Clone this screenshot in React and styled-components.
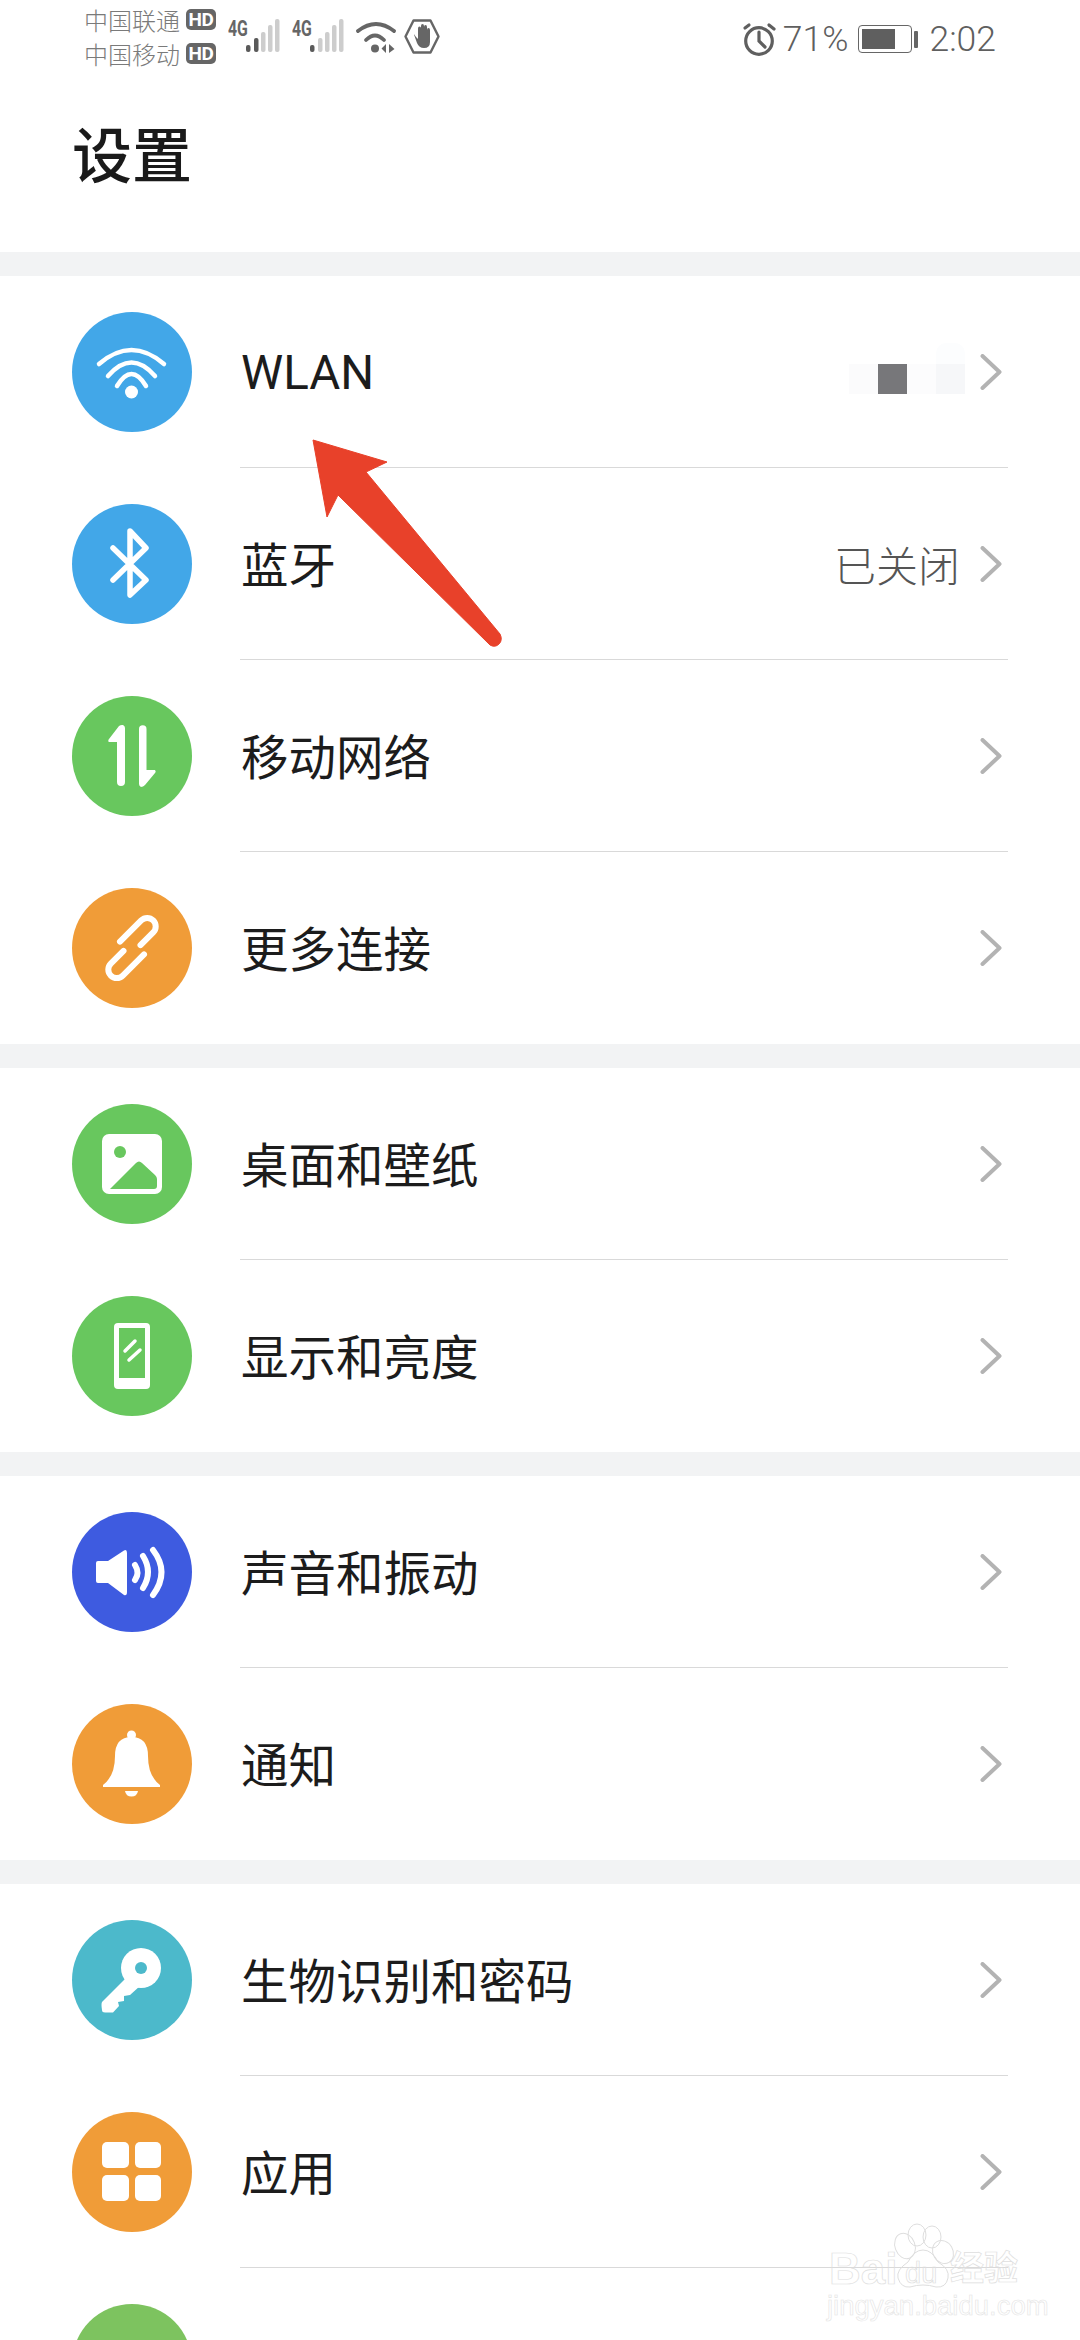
import React from "react";
import styled, { createGlobalStyle } from "styled-components";

const Global = createGlobalStyle`
  html, body { margin: 0; padding: 0; background: #fff; }
  * { box-sizing: border-box; }
`;
const FONT = `Roboto, "Noto Sans CJK SC", sans-serif`;

const Page = styled.div`
  position: relative; width: 1080px; height: 2340px; overflow: hidden;
  background: #f2f3f4; font-family: ${FONT};
`;
const Header = styled.header`background: #fff; height: 252px;`;
const StatusBar = styled.div`
  display: flex; align-items: flex-start; height: 72px; padding: 3px 84px 0 84px;
`;
const Carriers = styled.div`display: flex; flex-direction: column; margin-top: -1px;`;
const Carrier = styled.div`
  display: flex; align-items: center; height: 34px; gap: 6px;
  font-size: 24px; color: #7a7a7a; white-space: nowrap; font-weight: 300;
`;
const HdBadge = styled.span`
  display: flex; align-items: center; justify-content: center;
  width: 30px; height: 21px; border-radius: 5px; background: #666; color: #fff;
  font: 700 19px/1 ${FONT}; letter-spacing: -0.5px;
`;
const Signal = styled.div`
  position: relative; width: 52px; height: 36px; margin: 16px 0 0 ${p => p.$gap}px; flex: none;
`;
const NetLabel = styled.span`
  position: absolute; left: 0; top: -1px; font: 700 22px/22px ${FONT}; color: #666;
  transform: scaleX(0.72); transform-origin: left center;
`;
const SignalBars = styled.svg`position: absolute; left: 16px; top: 0;`;
const StatusIcon = styled.svg`flex: none; margin: ${p => p.$top || 14}px 0 0 ${p => p.$left}px;`;
const StatusRight = styled.div`
  display: flex; align-items: center; margin-left: auto; height: 42px; margin-top: 15px;
  font-size: 35.5px; font-weight: 300; color: #5f5f5f;
`;
const StatusText = styled.span`margin-left: ${p => p.$left}px; white-space: nowrap;`;
const Battery = styled.div`
  display: flex; align-items: center; margin-left: 10px; gap: 2px;
`;
const BatteryCase = styled.div`
  width: 54px; height: 28px; padding: 3px; border: 1.5px solid #666; border-radius: 4px;
`;
const BatteryLevel = styled.div`height: 100%; background: #5f5f5f;`;
const BatteryNub = styled.div`width: 4px; height: 17px; background: #666; border-radius: 1px;`;

const Title = styled.h1`
  margin: 0; padding: 47px 0 0 72px; font: 500 60px/78px ${FONT}; color: #1a1a1a;
`;
const Group = styled.section`background: #fff; margin-top: 24px;`;
const Row = styled.div`display: flex; align-items: center; height: 192px; padding-left: 72px;`;
const IconCircle = styled.div`
  flex: none; width: 120px; height: 120px; border-radius: 50%; background: ${p => p.$color};
  display: flex;
`;
const RowBody = styled.div`
  flex: 1; height: 100%; display: flex; align-items: center; margin: 0 72px 0 48px;
  padding-right: 6px;
  border-bottom: ${p => (p.$last ? "none" : "1.5px solid #d9d9d9")};
`;
const Label = styled.div`
  flex: 1; font-size: 47.5px; color: #1c1c1c; white-space: nowrap;
  padding: ${p => (p.$latin ? "3px 0 0 1px" : "0 0 3px 1px")};
`;
const Value = styled.div`font-size: 42px; font-weight: 300; color: #555; margin-right: 20px;`;
const Mosaic = styled.div`display: flex; margin: 14px -5px 0 0;`;
const Tile = styled.div`
  position: relative; width: 29px; height: 30px; background: ${p => p.$shade};
  ${p => p.$cap && `&::before {
    content: ""; position: absolute; left: 0; bottom: 100%; width: 29px; height: 21px;
    background: #fcfdfe; border-radius: 10px 10px 0 0;
  }`}
`;
const Chevron = styled.svg`flex: none; display: block;`;
const Annotation = styled.svg`position: absolute; left: 0; top: 0; pointer-events: none;`;
const Watermark = styled.div`
  position: absolute; left: 826px; top: 2222px; width: 200px; height: 100px;
  -webkit-text-stroke: 0.7px #dedede;
`;
const WatermarkPaw = styled.svg`position: absolute; left: 0; top: 0;`;
const WmBai = styled.span`
  position: absolute; left: 3px; top: 24px; font: 700 44px/45px "Liberation Sans", sans-serif;
  color: transparent;
`;
const WmDu = styled.span`
  position: absolute; left: 79px; top: 37px; font: 400 29px/29px "Liberation Sans", sans-serif;
  color: transparent;
`;
const WmJy = styled.span`
  position: absolute; left: 124px; top: 24px; font: 700 34px/40px "Noto Sans CJK SC", sans-serif;
  color: transparent; white-space: nowrap;
`;
const WmUrl = styled.span`
  position: absolute; left: 1px; top: 68px; font: 400 27.5px/32px "Liberation Sans", sans-serif;
  color: transparent; white-space: nowrap; -webkit-text-stroke: 0.6px #e4e4e4;
`;

const Ic = ({ children }) => <svg width="120" height="120" viewBox="0 0 120 120">{children}</svg>;
const S = { fill: "none", stroke: "#fff", strokeLinecap: "round", strokeLinejoin: "round" };

const icons = {
  wifi: <Ic><g {...S} strokeWidth="4.5"><path d="M27 52Q59.5 24 92 52" /><path d="M36 64Q59.5 37 83 64" /><path d="M45 74Q59.5 50 74 74" /></g><circle cx="59.5" cy="80" r="6.5" fill="#fff" /></Ic>,
  bt: <Ic><path {...S} strokeWidth="5.5" d="M41 44L74 76L58 91V27L74 44L41 76" /></Ic>,
  net: <Ic><path fill="#fff" d="M45 46H37.5C36 46 36 44 37 43L47 30Q49 28.5 51 29Q53 30 53 32V86A4 4 0 0 1 45 86Z" /><path fill="#fff" d="M67 33A3.7 3.7 0 0 1 74.5 33V74H82C84 74 84 76 83 77L73 89Q71 91 69 91Q67 90 67 88Z" /></Ic>,
  link: <Ic><g {...S} strokeWidth="6" transform="rotate(-45 60 60)"><path d="M56 47H86a8.5 8.5 0 0 1 0 17H68" /><path d="M64 73H34a8.5 8.5 0 0 1 0-17H52" /></g></Ic>,
  image: <Ic><rect x="30" y="30" width="60" height="60" rx="7" fill="#fff" /><circle cx="48" cy="48" r="6" fill="#68c75e" /><path fill="#68c75e" d="M38 85L64 59Q67 56 70 59L83 71Q85 73 85 75V82Q85 85 82 85Z" /></Ic>,
  display: <Ic><rect x="42" y="27" width="36" height="66" rx="4" fill="#fff" /><rect x="47" y="32" width="26" height="50" fill="#68c75e" /><g {...S} strokeWidth="3.5"><path d="M53 55L63 45" /><path d="M57 64L68 54" /></g></Ic>,
  sound: <Ic><path fill="#fff" d="M24 51Q24 49 26 49H36L52 38.5Q55 37 55 41V80Q55 84 52 83L36 71H26Q24 71 24 69Z" /><g {...S} strokeWidth="6"><path d="M63 53Q68 61 63 68" /><path d="M71 44Q81 60 71 76" /><path d="M81 38Q98 60 81 83" /></g></Ic>,
  bell: <Ic><circle cx="59.5" cy="31" r="4.5" fill="#fff" /><path fill="#fff" d="M31 83V81Q43 72 43 52Q43 33 59.5 33Q76 33 76 52Q76 72 88 81V83Z" /><path fill="#fff" d="M53 87H66Q65 92.5 59.5 92.5Q54 92.5 53 87Z" /></Ic>,
  key: <Ic><path fill="#fff" d="M56 56L30 82Q29 84 30 90Q30 92.5 33 92.5H41L47 86L46 82L52 81L52 76L58 75L68 66Z" /><circle cx="69" cy="48" r="20" fill="#fff" /><circle cx="69" cy="48" r="6" fill="#4cb9cb" /></Ic>,
  apps: <Ic><g fill="#fff"><rect x="30" y="30" width="27" height="26" rx="5" /><rect x="63" y="30" width="26" height="26" rx="5" /><rect x="30" y="63" width="27" height="26" rx="5" /><rect x="63" y="63" width="26" height="26" rx="5" /></g></Ic>,
};

const ChevronIcon = () => (
  <Chevron width="22" height="36" viewBox="0 0 22 36">
    <path d="M2.5 2L19.5 18L2.5 34" fill="none" stroke="#b3b3b3" strokeWidth="4" strokeLinecap="round" strokeLinejoin="round" />
  </Chevron>
);

const groups = [
  [
    { icon: "wifi", color: "#42a7e8", label: "WLAN", mosaic: true, latin: true },
    { icon: "bt", color: "#42a7e8", label: "蓝牙", value: "已关闭" },
    { icon: "net", color: "#68c75e", label: "移动网络" },
    { icon: "link", color: "#f09c38", label: "更多连接" },
  ],
  [
    { icon: "image", color: "#68c75e", label: "桌面和壁纸" },
    { icon: "display", color: "#68c75e", label: "显示和亮度" },
  ],
  [
    { icon: "sound", color: "#3e5be0", label: "声音和振动" },
    { icon: "bell", color: "#f09c38", label: "通知" },
  ],
  [
    { icon: "key", color: "#4cb9cb", label: "生物识别和密码" },
    { icon: "apps", color: "#f09c38", label: "应用", },
    { icon: null, color: "#7dc35f", label: "", noChevron: true },
  ],
];

const BarsIcon = ({ dark }) => (
  <SignalBars width="36" height="36" viewBox="0 0 36 36">
    {[[4, 26, 7], [12, 19, 14], [19, 13, 20], [26, 6, 27], [33, 0, 33]].map(([x, y, h], i) => (
      <rect key={x} x={x - 2} y={y} width="4.5" height={h} rx="2" fill={i < dark ? "#5a5a5a" : "#cdcdcd"} />
    ))}
  </SignalBars>
);

export default function App() {
  return (
    <Page>
      <Global />
      <Header>
        <StatusBar>
          <Carriers>
            <Carrier>中国联通<HdBadge>HD</HdBadge></Carrier>
            <Carrier>中国移动<HdBadge>HD</HdBadge></Carrier>
          </Carriers>
          <Signal $gap={12}><NetLabel>4G</NetLabel><BarsIcon dark={2} /></Signal>
          <Signal $gap={12}><NetLabel>4G</NetLabel><BarsIcon dark={1} /></Signal>
          <StatusIcon $left={12} $top={17} width="40" height="34" viewBox="0 0 40 34">
            <g fill="none" stroke="#666" strokeWidth="3.8" strokeLinecap="round">
              <path d="M2 11Q20 -3 38 11" /><path d="M10 20Q19 11 28 20" />
            </g>
            <circle cx="19" cy="28.5" r="4" fill="#666" />
            <path d="M30 24V33L25.5 28.5ZM33 24V33L38.5 29Z" fill="#666" />
          </StatusIcon>
          <StatusIcon $left={8} $top={16} width="36" height="36" viewBox="0 0 36 36">
            <path d="M1.5 17.5L9.5 1.5H26.5L34.5 17.5L26.5 33.5H9.5Z" fill="none" stroke="#666" strokeWidth="2.4" strokeLinejoin="round" />
            <path fill="#666" d="M12 18Q9 13 10.5 17L13 24Q15 29 20 29Q26 29 26 23V11Q26 9 24.5 9Q23 9 23 11V8Q23 6 21.5 6Q20 6 20 8V7Q20 5 18.5 5Q17 5 17 7V9Q17 7.5 15.5 7.5Q14 7.5 14 9.5V20Z" />
          </StatusIcon>
          <StatusRight>
            <svg width="34" height="34" viewBox="0 0 34 34">
              <g fill="none" stroke="#5f5f5f" strokeWidth="3.2" strokeLinecap="round">
                <circle cx="17" cy="19" r="13.3" />
                <path d="M17 10V19L23 25" />
                <path d="M3 6L7 3" /><path d="M27 3L32 7" />
              </g>
            </svg>
            <StatusText $left={7}>71%</StatusText>
            <Battery><BatteryCase><BatteryLevel style={{ width: "71%" }} /></BatteryCase><BatteryNub /></Battery>
            <StatusText $left={11}>2:02</StatusText>
          </StatusRight>
        </StatusBar>
        <Title>设置</Title>
      </Header>

      {groups.map((rows, g) => (
        <Group key={g}>
          {rows.map((r, i) => (
            <Row key={r.color + i}>
              <IconCircle $color={r.color}>{r.icon && icons[r.icon]}</IconCircle>
              <RowBody $last={i === rows.length - 1}>
                <Label $latin={r.latin}>{r.label}</Label>
                {r.value && <Value>{r.value}</Value>}
                {r.mosaic && (
                  <Value>
                    <Mosaic>
                      <Tile $shade="#fbfbfc" />
                      <Tile $shade="#77777a" />
                      <Tile $shade="#fcfcfd" />
                      <Tile $shade="#f6f7f9" $cap />
                    </Mosaic>
                  </Value>
                )}
                {!r.noChevron && <ChevronIcon />}
              </RowBody>
            </Row>
          ))}
        </Group>
      ))}

      <Annotation width="1080" height="700" viewBox="0 0 1080 700">
        <path fill="#e8412a" stroke="#e8412a" strokeWidth="1" strokeLinejoin="round"
          d="M313 440L387 462L366 472L500 634Q503 640 499 644Q495 648 490 645L338 495L327 517Z" />
      </Annotation>

      <Watermark>
        <WatermarkPaw width="200" height="100" viewBox="0 0 200 100" fill="none" stroke="#dedede" strokeWidth="1">
          <ellipse cx="79" cy="24" rx="10" ry="13" transform="rotate(-20 79 24)" />
          <ellipse cx="91" cy="13" rx="9" ry="11" />
          <ellipse cx="106" cy="15" rx="9" ry="11" />
          <ellipse cx="117" cy="30" rx="10" ry="12" transform="rotate(-30 117 30)" />
          <path d="M97 28Q88 28 82 40Q70 48 72 56Q75 66 84 65Q97 61 110 65Q120 66 122 56Q124 47 112 40Q106 28 97 28Z" />
        </WatermarkPaw>
        <WmBai>Bai</WmBai>
        <WmDu>du</WmDu>
        <WmJy>经验</WmJy>
        <WmUrl>jingyan.baidu.com</WmUrl>
      </Watermark>
    </Page>
  );
}
